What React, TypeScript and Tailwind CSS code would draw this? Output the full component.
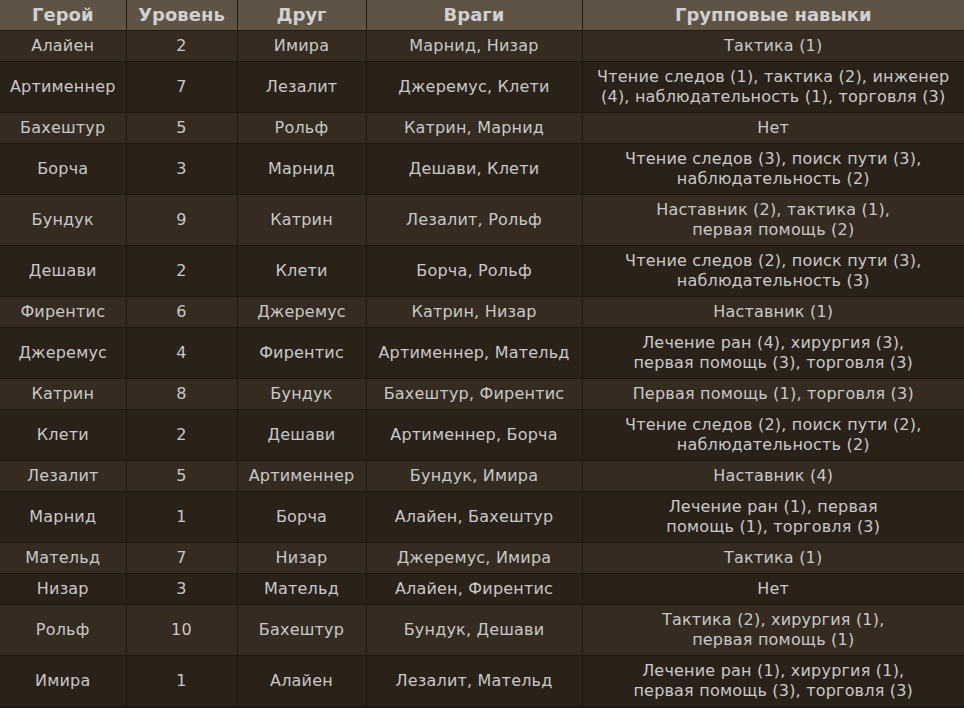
import React from "react";

type Row = { hero: string; lvl: string; friend: string; enemies: string; skills: string[] };

const rows: Row[] = [
  { hero: "Алайен", lvl: "2", friend: "Имира", enemies: "Марнид, Низар", skills: ["Тактика (1)"] },
  { hero: "Артименнер", lvl: "7", friend: "Лезалит", enemies: "Джеремус, Клети", skills: ["Чтение следов (1), тактика (2), инженер", "(4), наблюдательность (1), торговля (3)"] },
  { hero: "Бахештур", lvl: "5", friend: "Рольф", enemies: "Катрин, Марнид", skills: ["Нет"] },
  { hero: "Борча", lvl: "3", friend: "Марнид", enemies: "Дешави, Клети", skills: ["Чтение следов (3), поиск пути (3),", "наблюдательность (2)"] },
  { hero: "Бундук", lvl: "9", friend: "Катрин", enemies: "Лезалит, Рольф", skills: ["Наставник (2), тактика (1),", "первая помощь (2)"] },
  { hero: "Дешави", lvl: "2", friend: "Клети", enemies: "Борча, Рольф", skills: ["Чтение следов (2), поиск пути (3),", "наблюдательность (3)"] },
  { hero: "Фирентис", lvl: "6", friend: "Джеремус", enemies: "Катрин, Низар", skills: ["Наставник (1)"] },
  { hero: "Джеремус", lvl: "4", friend: "Фирентис", enemies: "Артименнер, Мательд", skills: ["Лечение ран (4), хирургия (3),", "первая помощь (3), торговля (3)"] },
  { hero: "Катрин", lvl: "8", friend: "Бундук", enemies: "Бахештур, Фирентис", skills: ["Первая помощь (1), торговля (3)"] },
  { hero: "Клети", lvl: "2", friend: "Дешави", enemies: "Артименнер, Борча", skills: ["Чтение следов (2), поиск пути (2),", "наблюдательность (2)"] },
  { hero: "Лезалит", lvl: "5", friend: "Артименнер", enemies: "Бундук, Имира", skills: ["Наставник (4)"] },
  { hero: "Марнид", lvl: "1", friend: "Борча", enemies: "Алайен, Бахештур", skills: ["Лечение ран (1), первая", "помощь (1), торговля (3)"] },
  { hero: "Мательд", lvl: "7", friend: "Низар", enemies: "Джеремус, Имира", skills: ["Тактика (1)"] },
  { hero: "Низар", lvl: "3", friend: "Мательд", enemies: "Алайен, Фирентис", skills: ["Нет"] },
  { hero: "Рольф", lvl: "10", friend: "Бахештур", enemies: "Бундук, Дешави", skills: ["Тактика (2), хирургия (1),", "первая помощь (1)"] },
  { hero: "Имира", lvl: "1", friend: "Алайен", enemies: "Лезалит, Мательд", skills: ["Лечение ран (1), хирургия (1),", "первая помощь (3), торговля (3)"] },
];

const headers = ["Герой", "Уровень", "Друг", "Враги", "Групповые навыки"];

const cell =
  "whitespace-nowrap border border-[#1f1811] px-1 py-[5px] text-center align-middle leading-[20px] text-[#c8c8c8]";

export default function App() {
  return (
    <div className="min-h-[708px] w-[964px] bg-[#1b1714] font-['DejaVu_Sans',Verdana,sans-serif] text-[16px] tracking-[0.2px]">
      <table className="w-[964px] table-fixed border-collapse">
        <colgroup>
          <col className="w-[126px]" />
          <col className="w-[111px]" />
          <col className="w-[129px]" />
          <col className="w-[216px]" />
          <col className="w-[382px]" />
        </colgroup>
        <thead>
          <tr className="bg-[#5f5345]">
            {headers.map((h) => (
              <th
                key={h}
                className="h-[30px] whitespace-nowrap border-x border-b border-[#1f1811] px-1 py-0 text-center align-middle text-[18px] font-bold leading-[20px] tracking-normal text-[#d0d0d0] first:border-l-0 last:border-r-0"
              >
                {h}
              </th>
            ))}
          </tr>
        </thead>
        <tbody>
          {rows.map((r, i) => (
            <tr key={r.hero} className={i % 2 === 0 ? "bg-[#352b21]" : "bg-[#2a2119]"}>
              <td className={`${cell} border-l-0`}>{r.hero}</td>
              <td className={cell}>{r.lvl}</td>
              <td className={cell}>{r.friend}</td>
              <td className={cell}>{r.enemies}</td>
              <td className={`${cell} border-r-0`}>
                {r.skills.map((s, j) => (
                  <React.Fragment key={j}>
                    {j > 0 && <br />}
                    {s}
                  </React.Fragment>
                ))}
              </td>
            </tr>
          ))}
        </tbody>
      </table>
    </div>
  );
}
